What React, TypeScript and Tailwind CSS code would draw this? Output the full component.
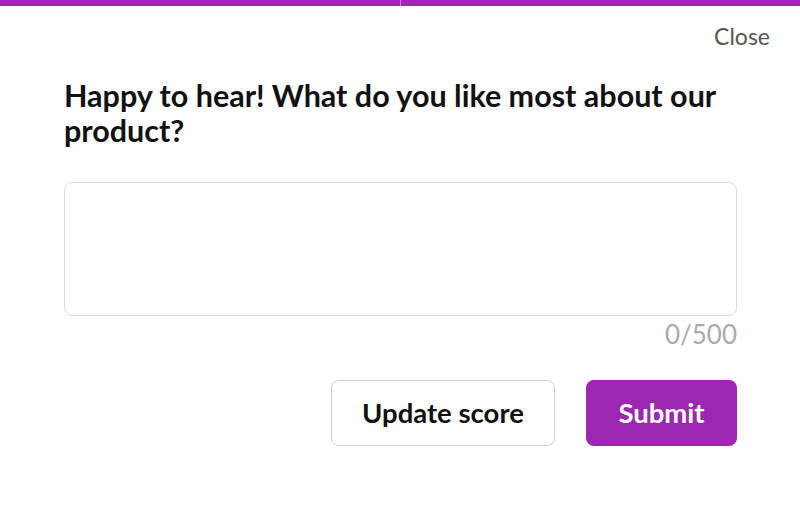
import React from "react";

export default function App() {
  return (
    <div className="w-[800px] h-[519px] bg-white flex flex-col" style={{ fontFamily: "Lato, 'Noto Sans', sans-serif" }}>
      <div className="flex h-[6px] w-full gap-px bg-[#c77fd3]">
        <div className="flex-1 bg-[#9c27b0]" />
        <div className="flex-1 bg-[#9c27b0]" />
      </div>
      <div className="flex justify-end pr-[30px] pt-[16px]">
        <button className="text-[23px] leading-[28px] text-[#555555]">Close</button>
      </div>
      <div className="pl-[64px] pr-[63px] pt-[28px] flex flex-col">
        <h1 className="text-[30.5px] leading-[35px] font-bold text-[#111111]">
          Happy to hear! What do you like most about our product?
        </h1>
        <textarea className="mt-[34px] h-[134px] w-full resize-none rounded-[8px] border border-[#dddddd] outline-none" />
        <div className="text-right text-[26px] leading-[30px] text-[#aaaaaa] mt-[3px]">0/500</div>
        <div className="flex justify-end gap-[31px] mt-[31px]">
          <button className="w-[224px] h-[66px] rounded-[8px] border border-[#d0d0d0] bg-white text-[27.5px] font-bold text-[#111111]">
            Update score
          </button>
          <button className="w-[151px] h-[66px] rounded-[8px] bg-[#9c27b0] text-[27.5px] font-bold text-white">
            Submit
          </button>
        </div>
      </div>
    </div>
  );
}
